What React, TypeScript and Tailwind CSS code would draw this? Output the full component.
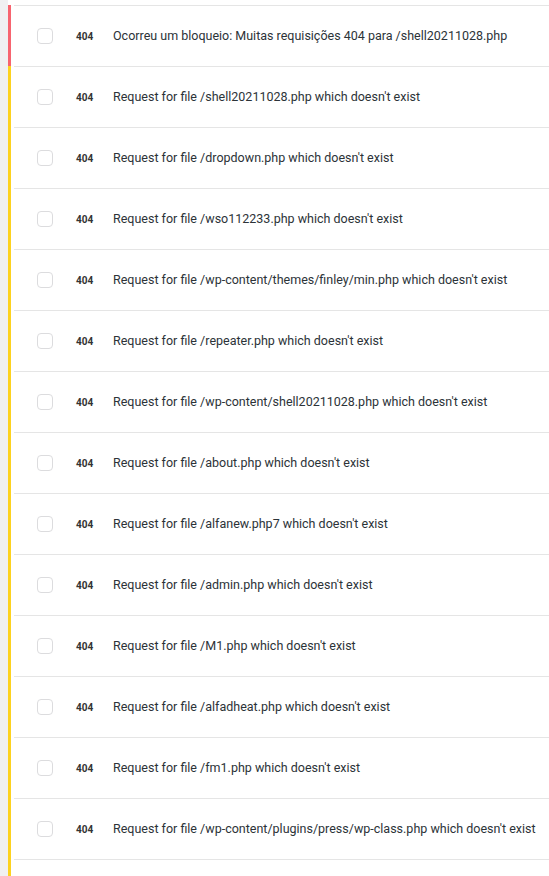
import React from "react";

type Row = { level: "block" | "warn"; code: string; message: string };

const rows: Row[] = [
  { level: "block", code: "404", message: "Ocorreu um bloqueio: Muitas requisições 404 para /shell20211028.php" },
  { level: "warn", code: "404", message: "Request for file /shell20211028.php which doesn't exist" },
  { level: "warn", code: "404", message: "Request for file /dropdown.php which doesn't exist" },
  { level: "warn", code: "404", message: "Request for file /wso112233.php which doesn't exist" },
  { level: "warn", code: "404", message: "Request for file /wp-content/themes/finley/min.php which doesn't exist" },
  { level: "warn", code: "404", message: "Request for file /repeater.php which doesn't exist" },
  { level: "warn", code: "404", message: "Request for file /wp-content/shell20211028.php which doesn't exist" },
  { level: "warn", code: "404", message: "Request for file /about.php which doesn't exist" },
  { level: "warn", code: "404", message: "Request for file /alfanew.php7 which doesn't exist" },
  { level: "warn", code: "404", message: "Request for file /admin.php which doesn't exist" },
  { level: "warn", code: "404", message: "Request for file /M1.php which doesn't exist" },
  { level: "warn", code: "404", message: "Request for file /alfadheat.php which doesn't exist" },
  { level: "warn", code: "404", message: "Request for file /fm1.php which doesn't exist" },
  { level: "warn", code: "404", message: "Request for file /wp-content/plugins/press/wp-class.php which doesn't exist" },
];

function LogRow({ row }: { row: Row }) {
  return (
    <div className="flex h-[61px]">
      <div className={`w-[3px] shrink-0 ${row.level === "block" ? "bg-[#f7646f]" : "bg-[#fdd21f]"}`} />
      <div className="ml-[3px] flex flex-1 items-center border-t border-[#e5e5e5]">
        <span className="ml-[23px] h-4 w-4 shrink-0 rounded-[4px] border border-[#dcdcde] bg-white" />
        <span className="ml-[23px] w-[37px] shrink-0 text-[10px] font-bold text-[#333]">{row.code}</span>
        <span className="whitespace-nowrap text-[12.5px] text-[#2c3338]">{row.message}</span>
      </div>
    </div>
  );
}

export default function App() {
  return (
    <div className="h-[876px] overflow-hidden bg-[#f0f0f1] pl-2" style={{ fontFamily: "Roboto, 'Liberation Sans', sans-serif" }}>
      <div className="flex h-full flex-col bg-white pt-[5px]">
        {rows.map((row, i) => (
          <LogRow key={i} row={row} />
        ))}
        {/* next row, cut off by the viewport */}
        <div className="flex flex-1">
          <div className="w-[3px] shrink-0 bg-[#fdd21f]" />
          <div className="ml-[3px] flex-1 border-t border-[#e5e5e5]" />
        </div>
      </div>
    </div>
  );
}
